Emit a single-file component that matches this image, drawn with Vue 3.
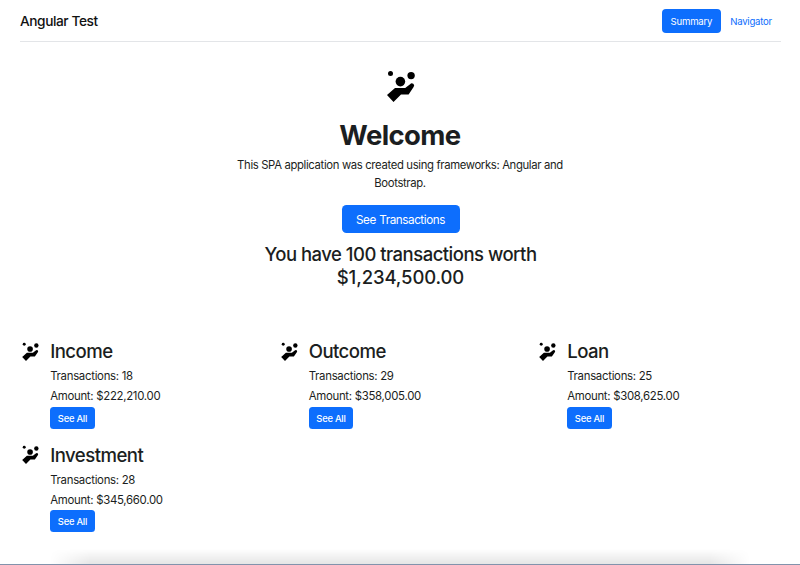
<script setup>
const nav = [
  { label: 'Summary', active: true },
  { label: 'Navigator', active: false },
]

const categories = [
  { name: 'Income', count: 18, amount: '$222,210.00' },
  { name: 'Outcome', count: 29, amount: '$358,005.00' },
  { name: 'Loan', count: 25, amount: '$308,625.00' },
  { name: 'Investment', count: 28, amount: '$345,660.00' },
]
</script>

<template>
  <div class="page">
    <svg class="symbols" aria-hidden="true">
      <symbol id="juggler" viewBox="0 0 34 34">
        <circle cx="5.5" cy="5.4" r="2.5" />
        <circle cx="15.4" cy="13.6" r="4.8" />
        <circle cx="26.1" cy="7.6" r="3.7" />
        <path d="M2 27.1 10 20H20.2L25.1 16.2A2.1 2.1 0 0 1 28.6 19L23.6 26.5H16L8.5 34Z" />
      </symbol>
    </svg>

    <header class="topbar">
      <span class="brand">Angular Test</span>
      <nav class="nav">
        <a v-for="item in nav" :key="item.label" class="nav-link" :class="{ active: item.active }">{{ item.label }}</a>
      </nav>
    </header>

    <section class="hero">
      <svg class="hero-icon"><use href="#juggler" /></svg>
      <h1>Welcome</h1>
      <p class="lead">This SPA application was created using frameworks: Angular and Bootstrap.</p>
      <button class="btn btn-lg">See Transactions</button>
      <h2 class="total">You have 100 transactions worth <span class="sum">$1,234,500.00</span></h2>
    </section>

    <section class="grid">
      <article v-for="c in categories" :key="c.name" class="card">
        <svg class="card-icon"><use href="#juggler" /></svg>
        <div>
          <h2 class="card-title">{{ c.name }}</h2>
          <p>Transactions: {{ c.count }}</p>
          <p>Amount: {{ c.amount }}</p>
          <button class="btn btn-sm">See All</button>
        </div>
      </article>
    </section>

    <div class="bottom-edge"><div class="shade"></div></div>
  </div>
</template>

<style>
body {
  margin: 0;
  background: #fff;
}
</style>

<style scoped>
.page {
  box-sizing: border-box;
  width: 800px;
  height: 565px;
  display: flex;
  flex-direction: column;
  overflow: hidden;
  font-family: Inter, "Liberation Sans", sans-serif;
  color: #1b1e21;
}
h1, h2, p { margin: 0; }
.symbols { display: none; }
.topbar {
  display: flex;
  justify-content: space-between;
  align-items: center;
  height: 41px;
  flex: none;
  margin: 0 19px 0 20px;
  border-bottom: 1px solid #e3e5e8;
}
.brand {
  color: #111;
  font-size: 13.7px;
  font-weight: 500;
  letter-spacing: -0.42px;
}
.nav { display: flex; }
.nav-link {
  box-sizing: border-box;
  height: 24px;
  padding: 0 9px;
  border-radius: 4px;
  line-height: 25px;
  font-size: 9.6px;
  letter-spacing: -0.23px;
  color: #0d6efd;
}
.nav-link.active {
  background: #0d6efd;
  color: #fff;
}
.btn {
  display: block;
  padding: 0;
  border: 0;
  background: #0d6efd;
  color: #fff;
  font-family: inherit;
}
.hero {
  display: flex;
  flex-direction: column;
  align-items: center;
  width: 350px;
  height: 297px;
  flex: none;
  margin: 0 auto;
  text-align: center;
}
.hero-icon {
  width: 34px;
  height: 34px;
  margin: 26px 0 0 4px;
  flex: none;
}
h1 {
  margin-top: 16px;
  font-size: 27.5px;
  line-height: 34px;
  font-weight: 700;
  letter-spacing: -0.6px;
}
.lead {
  margin-top: 4px;
  font-size: 11.3px;
  line-height: 18px;
  letter-spacing: -0.345px;
}
.btn-lg {
  width: 118px;
  height: 28px;
  flex: none;
  margin: 13px 0 0 1px;
  padding-top: 1px;
  border-radius: 4.5px;
  font-size: 11.7px;
  letter-spacing: -0.43px;
  word-spacing: 0.5px;
}
.total {
  margin: 10px 0 0 1px;
  font-size: 18.5px;
  line-height: 23px;
  font-weight: 500;
  letter-spacing: -0.51px;
}
.sum { letter-spacing: -0.12px; }
.grid {
  display: grid;
  grid-template-columns: repeat(3, 258.5px);
  grid-auto-rows: 103.5px;
  margin: 0 0 0 20px;
  flex: 1;
}
.card {
  display: flex;
  align-items: flex-start;
}
.card-icon {
  width: 20px;
  height: 20px;
  margin: 1.5px 9.2px 0 1px;
  flex: none;
}
.card-title {
  font-size: 18.6px;
  line-height: 24px;
  font-weight: 500;
  letter-spacing: -0.55px;
  margin-bottom: 3px;
}
.card p {
  font-size: 11.4px;
  line-height: 20px;
  letter-spacing: -0.29px;
}
.btn-sm {
  width: 44.5px;
  height: 22px;
  margin-top: 0.5px;
  padding-top: 1px;
  border-radius: 3.5px;
  font-size: 9.4px;
  font-weight: 500;
  letter-spacing: -0.25px;
}
.bottom-edge {
  height: 15px;
  flex: none;
  border-bottom: 1px solid #8293ac;
}
.shade {
  height: 15px;
  margin: 0 50px;
  background: linear-gradient(to bottom, rgba(0, 0, 0, 0), rgba(0, 0, 0, 0.1));
  mask-image: linear-gradient(to right, transparent, #000 40px, #000 calc(100% - 40px), transparent);
}
</style>
